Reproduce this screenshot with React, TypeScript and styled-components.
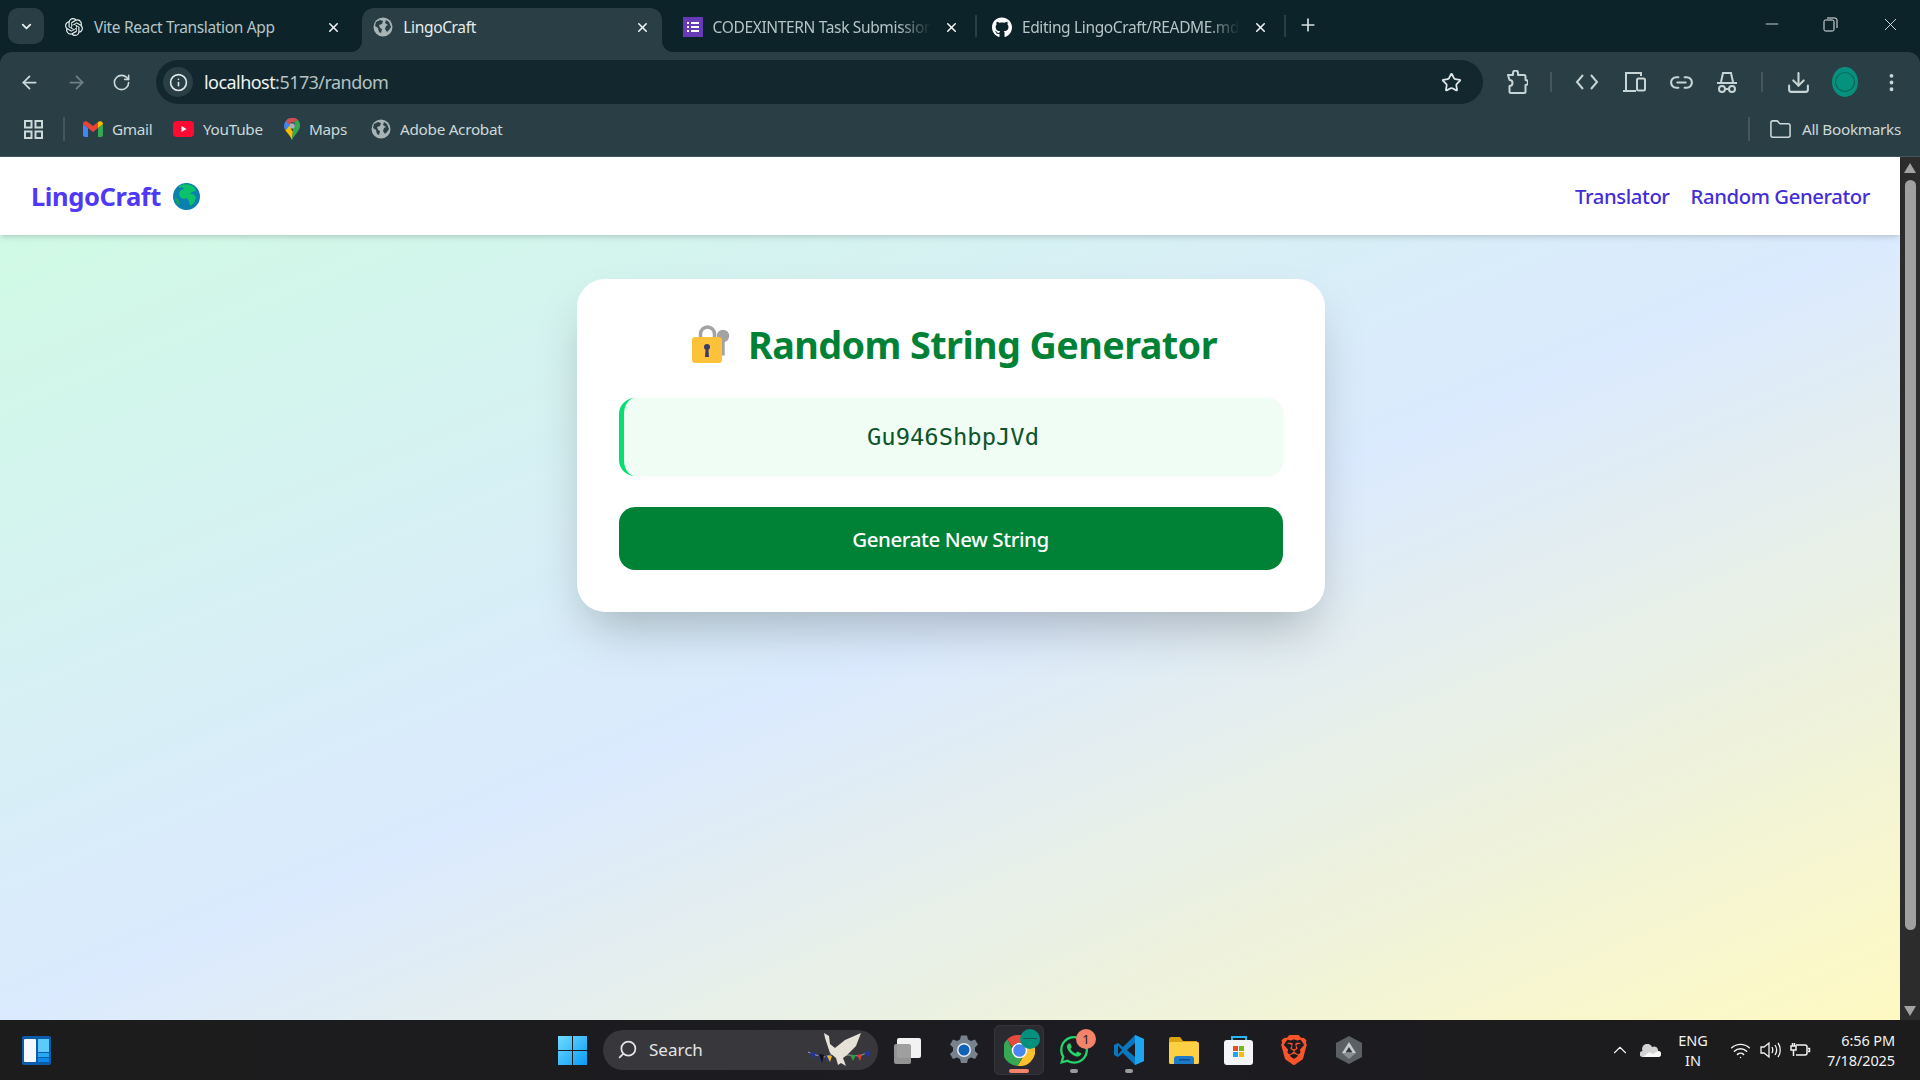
import React from "react";
import styled, { createGlobalStyle } from "styled-components";
import { ArrowLeft, ArrowRight, RotateCw, Info, Star, Link2, Download, EllipsisVertical, Folder, X, Plus, Minus, ChevronDown, ChevronUp, Search as SearchGlyph, Wifi } from "lucide-react";
import { SiOpenai, SiBrave } from "react-icons/si";
import { FaGithub, FaWhatsapp } from "react-icons/fa";

const UI = `"Noto Sans", "Open Sans", Arial, sans-serif`;

const Global = createGlobalStyle`
  html, body { margin: 0; padding: 0; width: 1920px; height: 1080px; overflow: hidden; }
  body { font-family: ${UI}; }
  * { box-sizing: border-box; }
`;

const Screen = styled.div`
  width: 1920px; height: 1080px; display: flex; flex-direction: column; overflow: hidden; background: #0c2329;
`;

const TabStrip = styled.div`
  height: 52px; background: #0c2329; display: flex; align-items: flex-end; padding-left: 8px; flex: none;
`;
const TabSearch = styled.div`
  width: 36px; height: 36px; margin: 0 9px 8px 0; border-radius: 10px; background: #2a3f45; color: #e4ebec;
  display: flex; align-items: center; justify-content: center;
`;
const Tab = styled.div<{ $active?: boolean; $sep?: boolean }>`
  position: relative; width: 300px; height: 44px; margin-right: 9.3px; flex: none;
  display: flex; align-items: center; padding: 0 0 6px 11px; color: ${p => (p.$active ? "#e6ecec" : "#b6c4c6")};
  font-size: 15.5px; letter-spacing: -0.35px; border-radius: 12px 12px 0 0;
  background: ${p => (p.$active ? "#2a3f45" : "transparent")};
  ${p => p.$active ? `
    &::before, &::after { content: ""; position: absolute; bottom: 0; width: 12px; height: 12px; }
    &::before { left: -12px; background: radial-gradient(circle at 0 0, transparent 12px, #2a3f45 12.5px); }
    &::after { right: -12px; background: radial-gradient(circle at 100% 0, transparent 12px, #2a3f45 12.5px); }
  ` : ""}
  ${p => p.$sep ? `
    &::after { content: ""; position: absolute; right: -5.5px; top: 7px; width: 2px; height: 22px; background: #2a3f45; }
  ` : ""}
`;
const TabIcon = styled.span`
  width: 20px; height: 20px; flex: none; display: flex; align-items: center; justify-content: center; color: #e8eeee;
`;
const TabTitle = styled.span<{ $fade?: boolean }>`
  margin-left: 10px; width: 218px; white-space: nowrap; flex: none;
  ${p => p.$fade ? `mask-image: linear-gradient(90deg, #000 85%, transparent 100%);` : ""}
`;
const TabClose = styled.span`
  margin-left: 11px; width: 20px; height: 20px; flex: none; display: flex; align-items: center; justify-content: center; color: #f0f4f4;
`;
const NewTab = styled.div`
  width: 24px; height: 24px; margin: 0 0 15px 6px; color: #d6e0e1; display: flex; align-items: center; justify-content: center;
`;
const WindowControls = styled.div`
  margin-left: auto; height: 52px; display: flex; align-items: center; padding: 0 19px 4px 0; gap: 41px; color: #e9eeee; align-self: flex-start;
`;
const Toolbar = styled.div`
  height: 52px; background: #2a3f45; border-radius: 12px 12px 0 0; display: flex; align-items: flex-start; flex: none; padding: 8px 0 0 19px; color: #cfdadb;
`;
const NavButton = styled.div<{ $dim?: boolean; $w?: number }>`
  width: ${p => p.$w ?? 46.5}px; height: 44px; display: flex; align-items: center; justify-content: flex-start; color: ${p => (p.$dim ? "#6f8084" : "#cfdadb")}; flex: none;
`;
const Omnibox = styled.div`
  width: 1327px; height: 44px; border-radius: 22px; background: #12282e; display: flex; align-items: center; padding: 0 21px 0 7px; flex: none;
`;
const InfoBubble = styled.div`
  width: 30px; height: 30px; border-radius: 50%; background: #2a3f45; color: #e3e9ea; display: flex; align-items: center; justify-content: center; flex: none;
`;
const Url = styled.div`
  margin-left: 11px; font-size: 18px; letter-spacing: -0.55px; color: #b4c2c4; flex: 1;
  & b { font-weight: 400; color: #eef2f2; }
`;
const ToolIcons = styled.div`
  display: flex; align-items: center; height: 44px; margin-left: 11px;
`;
const ToolSlot = styled.div<{ $w: number }>`
  width: ${p => p.$w}px; display: flex; justify-content: center; align-items: center; flex: none; color: #c8d5d6;
`;
const ToolSep = styled.div`
  width: 2px; height: 20px; background: #44575c; flex: none;
`;
const Avatar = styled.div`
  width: 26px; height: 30px; border-radius: 50%; background: #06917f; display: flex; align-items: center; justify-content: center;
  &::after { content: ""; width: 18px; height: 18px; border-radius: 50%; border: 1px solid #0f5c50; border-top-color: #0d6d5f; }
`;
const BookmarksBar = styled.div`
  height: 53px; background: #2a3f45; border-bottom: 1px solid #44565b; display: flex; align-items: center; padding: 0 0 2px 24px; color: #cdd8d9; font-size: 15.3px; letter-spacing: -0.3px; flex: none;
`;
const Bookmark = styled.div<{ $w: number }>`
  display: flex; align-items: center; width: ${p => p.$w}px; flex: none; gap: 9px; white-space: nowrap;
`;
const BarSep = styled.div<{ $tight?: boolean }>`
  width: 2px; height: 24px; background: #44575c; flex: none; margin: 0 ${p => (p.$tight ? 9 : 18)}px 0 20px;
`;
const AllBookmarks = styled.div`
  margin-left: auto; display: flex; align-items: center; gap: 10px; padding-right: 19px; white-space: nowrap;
`;
const PageRow = styled.div`
  flex: 1; min-height: 0; display: flex;
`;
const PageColumn = styled.div`
  flex: 1; min-width: 0; display: flex; flex-direction: column;
`;
const TopNav = styled.nav`
  height: 78px; background: #fff; display: flex; align-items: center; justify-content: space-between; padding: 0 30px 0 31px;
  box-shadow: 0 4px 6px -1px rgba(0,0,0,.1), 0 2px 4px -2px rgba(0,0,0,.1); position: relative; z-index: 1; flex: none;
`;
const Brand = styled.div`
  display: flex; align-items: center; gap: 12px; font-size: 25.5px; font-weight: 700; color: #4f39f6; letter-spacing: -0.4px;
`;
const NavLinks = styled.div`
  display: flex; gap: 21px;
`;
const NavLink = styled.a`
  font-size: 20.3px; font-weight: 500; color: #432dd7; letter-spacing: -0.4px;
`;
const Content = styled.main`
  flex: 1; padding: 44px 0 0 1px; display: flex; justify-content: center; align-items: flex-start;
  background: linear-gradient(to bottom right, #d0fae5 0%, #dbeafe 50%, #fef9c2 100%);
`;
const Card = styled.section`
  width: 748px; background: #fff; border-radius: 28px; padding: 42px; display: flex; flex-direction: column; flex: none;
  box-shadow: 0 25px 50px -12px rgba(0, 0, 0, .25);
`;
const Title = styled.h1`
  margin: 0; height: 49px; display: flex; justify-content: center; align-items: center; gap: 18px; padding: 0 0 3px 8px;
  font-size: 37.8px; font-weight: 700; color: #008236; letter-spacing: -0.6px; white-space: nowrap;
`;
const Output = styled.div`
  margin-top: 28px; height: 78px; background: #f0fdf4; border-left: 5px solid #05df72; border-radius: 16px; flex: none;
  display: flex; align-items: center; justify-content: center; font-family: "DejaVu Sans Mono", "Liberation Mono", monospace; font-size: 23.8px; color: #0d542b;
  box-shadow: 0 0 2px rgba(0,0,0,.06);
`;
const Generate = styled.button`
  margin-top: 31px; height: 63px; width: 100%; border: 0; border-radius: 16px; background: #008236; color: #fff; flex: none;
  font-family: ${UI}; font-size: 20.5px; font-weight: 500; letter-spacing: -0.4px;
`;
const Scrollbar = styled.div`
  width: 20px; flex: none; background: #2c2c2c; display: flex; flex-direction: column; align-items: center; padding-top: 6px;
`;
const ScrollArrow = styled.div<{ $down?: boolean }>`
  width: 0; height: 0; border-left: 6.5px solid transparent; border-right: 6.5px solid transparent;
  ${p => p.$down ? `border-top: 10px solid #a3a3a3; margin-top: auto; margin-bottom: 4px;` : `border-bottom: 10px solid #a3a3a3;`}
`;
const ScrollThumb = styled.div`
  width: 11px; height: 750px; margin-top: 7px; border-radius: 6px; background: #a0a0a0;
`;
const Taskbar = styled.footer`
  height: 60px; flex: none; background: linear-gradient(90deg, #1c1c1c, #1c1c22 55%, #1c1c1c); display: grid; grid-template-columns: 558px auto 1fr; align-items: center;
  color: #fff;
`;
const TaskLeft = styled.div`
  padding-left: 22px; display: flex; align-items: center;
`;
const TaskCenter = styled.div`
  display: flex; align-items: center;
`;
const SearchPill = styled.div`
  margin: 0 6px 0 16px; width: 275px; height: 40px; border-radius: 20px; background: #38383c; display: flex; align-items: center; padding: 0 6px 2px 14px; gap: 11px;
  font-size: 17px; color: #e4e4e4;
`;
const DoveSlot = styled.span`
  margin-left: auto; display: flex;
`;
const MirroredSearch = styled(SearchGlyph)`
  transform: scaleX(-1);
`;
const TaskSlot = styled.div<{ $active?: boolean; $dot?: string }>`
  position: relative; width: 50px; height: 50px; margin-right: 5px; border-radius: 6px; display: flex; align-items: center; justify-content: center; flex: none;
  ${p => p.$active ? `background: #2a2a30; box-shadow: inset 0 0 0 1px #35353a;` : ""}
  ${p => p.$dot ? `&::after { content: ""; position: absolute; bottom: 2px; left: 50%; transform: translateX(-50%); height: 4px; border-radius: 2px; width: ${p.$dot === "#9a9a9a" ? 8 : 20}px; background: ${p.$dot}; }` : ""}
`;
const Badge = styled.div`
  position: absolute; top: 4px; right: 3px; width: 20px; height: 20px; border-radius: 50%; background: #f5836a; color: #222; font-size: 13px; display: flex; align-items: center; justify-content: center;
`;
const Tray = styled.div`
  display: flex; align-items: center; justify-content: flex-end; padding-right: 25px; color: #f2f2f2; font-size: 14.5px; line-height: 20px;
`;
const TrayIcon = styled.div<{ $w: number }>`
  width: ${p => p.$w}px; display: flex; justify-content: center; align-items: center; flex: none;
`;
const TrayLang = styled.div`
  width: 64px; text-align: center; flex: none;
`;
const Clock = styled.div`
  width: 80px; text-align: right; flex: none; letter-spacing: -0.1px; white-space: nowrap;
`;

const GlobeGrey = () => (
  <svg width="20" height="20" viewBox="0 0 20 20">
    <circle cx="10" cy="10" r="9.5" fill="#a8b3b6" />
    <path d="M3 5l4-2 3 1-1 3-3 1 1 3 2 1-1 4-2-1-1-4-3-2zM13 3l3 2 2 5-2 3-2 2-2-3 1-3 2-1-3-2z" fill="#2a3f45" />
  </svg>
);
const FormsIcon = () => (
  <svg width="20" height="20" viewBox="0 0 20 20">
    <rect width="20" height="20" fill="#673ab7" />
    <path d="M4 5h2v2H4zM8 5h8v2H8zM4 9h2v2H4zM8 9h8v2H8zM4 13h2v2H4zM8 13h8v2H8z" fill="#fff" />
  </svg>
);
const Gmail = () => (
  <svg width="20" height="16" viewBox="0 0 20 16">
    <path d="M0 3v11a2 2 0 002 2h3V7z" fill="#4285f4" />
    <path d="M20 3v11a2 2 0 01-2 2h-3V7z" fill="#34a853" />
    <path d="M0 3l5 4 5 4 5-4V1l-5 4-6-4.5C2 -.5 0 1 0 3z" fill="#ea4335" />
    <path d="M15 1v6l5-4c0-2-2-3.500-4-2.500z" fill="#fbbc04" />
  </svg>
);
const YouTube = () => (
  <svg width="21" height="16" viewBox="0 0 21 16">
    <rect width="21" height="16" rx="4" fill="#ff0a33" />
    <path d="M8.500 5l5 3-5 3z" fill="#fff" />
  </svg>
);
const Maps = () => (
  <svg width="16" height="22" viewBox="0 0 16 22">
    <path d="M8 0a8 8 0 00-6.500 12.500L5 8a3.500 3.500 0 015-3.500l3.500-3A8 8 0 008 0z" fill="#4285f4" />
    <path d="M1.500 12.500C3 15 6 17 8 22l1-8-4-6z" fill="#fbbc04" />
    <path d="M8 22c2-5 8-9 8-14a8 8 0 00-2.500-6.500L10 4.500c2 2 1 5-1 6.500z" fill="#34a853" />
    <path d="M10 4.500L13.500 1.500A8 8 0 002 3l3 4a3.500 3.500 0 015-2.500z" fill="#ea4335" opacity=".85" />
    <circle cx="8" cy="8" r="2.800" fill="#fff" opacity=".6" />
  </svg>
);
const AppsGrid = () => (
  <svg width="19" height="19" viewBox="0 0 19 19" fill="none" stroke="#cdd8d9" strokeWidth="2">
    <rect x="1" y="1" width="6.500" height="6.500" /><rect x="11.500" y="1" width="6.500" height="6.500" />
    <rect x="1" y="11.500" width="6.500" height="6.500" /><rect x="11.500" y="11.500" width="6.500" height="6.500" />
  </svg>
);
const ExtensionIcon = () => (
  <svg width="22" height="24" viewBox="0 0 22 24" fill="none" stroke="currentColor" strokeWidth="2" strokeLinejoin="round">
    <path d="M2 5h5V3a2.500 2.500 0 015 0v2h6a1.500 1.500 0 011.500 1.500V10a2.500 2.500 0 010 5v6.500A1.500 1.500 0 0118 23H5a1.500 1.500 0 01-1.500-1.500V16a3 3 0 000-6z" />
  </svg>
);
const CodeIcon = () => (
  <svg width="24" height="18" viewBox="0 0 24 18" fill="none" stroke="currentColor" strokeWidth="2">
    <path d="M8 2L2 9l6 7M16 2l6 7-6 7" />
  </svg>
);
const DevicesIcon = () => (
  <svg width="24" height="22" viewBox="0 0 24 22" fill="none" stroke="currentColor" strokeWidth="2">
    <path d="M3 19V2h15v3M0 20h13" /><rect x="14" y="7.500" width="8" height="12" rx="1.500" />
  </svg>
);
const SpyIcon = () => (
  <svg width="22" height="24" viewBox="0 0 22 24" fill="none" stroke="currentColor" strokeWidth="2">
    <path d="M1 13h20M5 12l2-9h8l2 9" /><circle cx="6" cy="19" r="3" /><circle cx="16" cy="19" r="3" /><path d="M9 19h4" />
  </svg>
);
const LockKey = () => (
  <svg width="38" height="38" viewBox="0 0 38 38">
    <path d="M8.500 14V9a7 7 0 0114 0v5" fill="none" stroke="#a3a3a3" strokeWidth="3.500" />
    <circle cx="31" cy="11" r="6.200" fill="#a3a3a3" />
    <rect x="29.500" y="14" width="3.200" height="16.500" fill="#a3a3a3" />
    <rect y="12" width="30" height="26" rx="3" fill="#fbc23a" />
    <circle cx="15" cy="22" r="3" fill="#3c3a6b" />
    <path d="M13.700 23h2.600l.7 9h-4z" fill="#3c3a6b" />
  </svg>
);
const EarthEmoji = () => (
  <svg width="27" height="27" viewBox="0 0 27 27">
    <circle cx="13.500" cy="13.500" r="13.500" fill="#0b7fae" />
    <path d="M6 3c3-2 11-3 15 1l2 4-4 1-2 2h3l3 3-2 6-4 3-1-5-2-3-4 1-3-2-1-4 2-3 3-1-2-2-3 1z" fill="#0cc268" />
    <path d="M2 14l3 2 2 5-2 1-3-4z" fill="#14a05a" />
  </svg>
);
const Windows11 = ({ size = 29 }: { size?: number }) => (
  <svg width={size} height={size} viewBox="0 0 29 29">
    <defs>
      <linearGradient id="w11" x1="0" y1="0" x2="1" y2="1"><stop offset="0" stopColor="#6fdcff" /><stop offset="1" stopColor="#0a9bf5" /></linearGradient>
    </defs>
    <path d="M0 0h14v14H0zM15 0h14v14H15zM0 15h14v14H0zM15 15h14v14H15z" fill="url(#w11)" />
  </svg>
);
const WidgetIcon = () => (
  <svg width="29" height="29" viewBox="0 0 29 29">
    <rect width="29" height="29" rx="2" fill="#0d5cab" />
    <rect x="2" y="3" width="12" height="23" rx="1" fill="#f4f7fb" />
    <rect x="16" y="3" width="11" height="13" fill="#5ccbfa" />
    <rect x="16" y="17" width="11" height="4" fill="#28a8f0" />
    <rect x="16" y="22" width="11" height="4" fill="#0f8ae8" />
  </svg>
);
const Dove = () => (
  <svg width="66" height="40" viewBox="0 0 66 40">
    <path d="M2 23l8 3 8 2 10-3 14 1 12 1 10-5" fill="none" stroke="#bbb" strokeWidth=".8" />
    <path d="M4 23l6 1-3 6zM12 25l5 1-3 7zM19 27l5 0-2 7z" fill="#2335a5" />
    <path d="M13 25l5 1-2 8z" fill="#111" />
    <path d="M21 27l5 0-2 6z" fill="#f2b21b" />
    <path d="M44 26l6 0-3 6z" fill="#2d9a46" /><path d="M51 26l5-1-2 7z" fill="#d34040" /><path d="M58 24l6-3v8z" fill="#2335a5" />
    <path d="M18 4l5 3 1 8 5 4 10-8 16-7-5 13-9 9-4 3 3 8-5-3-3 2-2-7-6-5-5-15z" fill="#e6e2d8" />
  </svg>
);
const TaskViewIcon = () => (
  <svg width="30" height="30" viewBox="0 0 30 30">
    <rect x="3" y="3" width="24" height="20" rx="2" fill="#f2f2f2" />
    <rect y="9" width="17" height="20" rx="2" fill="#9a9a9a" opacity=".95" />
  </svg>
);
const Gear = () => (
  <svg width="30" height="30" viewBox="0 0 30 30">
    <path d="M12 0h6l1 4 3 1.500 4-1.500 3 5-3 3v3.500l3 3-3 5-4-1.500-3 1.500-1 4h-6l-1-4-3-1.500-4 1.500-3-5 3-3V12L1 9l3-5 4 1.500L11 4z" fill="#77828c" transform="translate(0 .5)" />
    <circle cx="15" cy="15" r="7" fill="#e9eef2" /><circle cx="15" cy="15" r="5.500" fill="#0f62b8" />
  </svg>
);
const Chrome = () => (
  <svg width="31" height="31" viewBox="0 0 32 32">
    <path d="M16 0a16 16 0 0113.900 8H16a8 8 0 00-7.500 5L3.500 4.500A16 16 0 0116 0z" fill="#e64a3b" />
    <path d="M3.500 4.500L9.500 16a8 8 0 009 7.500L14 32A16 16 0 013.500 4.500z" fill="#34a853" />
    <path d="M29.900 8a16 16 0 01-15.900 24l7-12a8 8 0 00-1-12z" fill="#fbc02d" />
    <circle cx="16" cy="16" r="8" fill="#fff" /><circle cx="16" cy="16" r="6.500" fill="#4a86f0" />
  </svg>
);
const MiniAvatar = styled.div`
  position: absolute; top: 4px; right: 4px; width: 20px; height: 20px; border-radius: 50%; background: #06917f;
  &::after { content: ""; display: block; height: 1px; margin: 9px 3px 0; background: #0f5c50; }
`;
const VSCode = () => (
  <svg width="30" height="30" viewBox="0 0 30 30">
    <path d="M21 0l9 4v22l-9 4-12-12-5 4-4-2v-10l4-2 5 4z" fill="#0a77c0" />
    <path d="M21 0l9 4v22l-9 4z" fill="#1ea5ef" />
    <path d="M21 8v14l-8-7z" fill="#1c1c22" />
    <path d="M4 10.500L8 15l-4 4.500z" fill="#1c1c22" />
  </svg>
);
const FolderColor = () => (
  <svg width="30" height="27" viewBox="0 0 30 27">
    <path d="M0 2a2 2 0 012-2h9l3 4h14v6H0z" fill="#dba410" />
    <rect y="5" width="30" height="22" rx="1.500" fill="#fdd044" />
    <path d="M5 27v-5a3 3 0 013-3h14a3 3 0 013 3v5z" fill="#1c7ac9" />
    <rect x="10" y="22" width="11" height="1.500" fill="#0c4f8f" />
  </svg>
);
const StoreIcon = () => (
  <svg width="30" height="30" viewBox="0 0 30 30">
    <path d="M8 6V2h14v4" fill="none" stroke="#29b6f6" strokeWidth="2" />
    <rect y="5" width="29" height="25" rx="3" fill="#f4f5f6" />
    <rect x="9" y="11" width="5" height="5" fill="#e94e2b" /><rect x="15" y="11" width="5" height="5" fill="#7cb518" />
    <rect x="9" y="17" width="5" height="5" fill="#1ea5ef" /><rect x="15" y="17" width="5" height="5" fill="#fbbc04" />
  </svg>
);
const PolyIcon = () => (
  <svg width="26" height="28" viewBox="0 0 26 28">
    <path d="M13 0l13 7v14l-13 7L0 21V7z" fill="#5b6064" />
    <path d="M13 6l7 11H6z" fill="#c9ccce" /><path d="M13 11l3.500 5.500h-7z" fill="#33363a" />
    <path d="M6 17h14l-7 6z" fill="#8a8f93" />
  </svg>
);
const Cloud = () => (
  <svg width="21" height="13" viewBox="0 0 21 13">
    <path d="M3 13a3 3 0 01-.5-6A5 5 0 0112 3a4 4 0 016 4 3 3 0 010 6z" fill="#d2d2d2" />
    <path d="M3 13l6-5 4 2 5-3a3 3 0 010 6z" fill="#f7f7f7" />
  </svg>
);
const Speaker = () => (
  <svg width="21" height="18" viewBox="0 0 21 18" fill="none" stroke="#f2f2f2" strokeWidth="1.300">
    <path d="M1 6h3l5-4v14l-5-4H1zM12 6c1 2 1 4 0 6M15 4c2 3 2 7 0 10M18 2c3 4 3 10 0 14" />
  </svg>
);
const BatteryPlug = () => (
  <svg width="21" height="16" viewBox="0 0 21 16" fill="none" stroke="#f2f2f2" strokeWidth="1.500">
    <path d="M6 3h9a2 2 0 012 2v6a2 2 0 01-2 2H6M18 6.500h1.500v3H18" />
    <path d="M1 4h5v4H1zM2.500 1v3M4.500 1v3M3.500 8v6" />
  </svg>
);

const App = () => (
  <Screen>
    <Global />
    <TabStrip>
      <TabSearch><ChevronDown size={15} strokeWidth={3} /></TabSearch>
      <Tab>
        <TabIcon><SiOpenai size={18} /></TabIcon>
        <TabTitle>Vite React Translation App</TabTitle>
        <TabClose><X size={15} strokeWidth={2.5} /></TabClose>
      </Tab>
      <Tab $active>
        <TabIcon><GlobeGrey /></TabIcon>
        <TabTitle>LingoCraft</TabTitle>
        <TabClose><X size={15} strokeWidth={2.5} /></TabClose>
      </Tab>
      <Tab $sep>
        <TabIcon><FormsIcon /></TabIcon>
        <TabTitle $fade>CODEXINTERN Task Submission</TabTitle>
        <TabClose><X size={15} strokeWidth={2.5} /></TabClose>
      </Tab>
      <Tab $sep>
        <TabIcon><FaGithub size={21} color="#fff" /></TabIcon>
        <TabTitle $fade>Editing LingoCraft/README.md</TabTitle>
        <TabClose><X size={15} strokeWidth={2.5} /></TabClose>
      </Tab>
      <NewTab><Plus size={20} /></NewTab>
      <WindowControls>
        <Minus size={20} strokeWidth={1} />
        <svg width="16" height="16" viewBox="0 0 16 16" fill="none" stroke="currentColor" strokeWidth="1"><rect x="1" y="4" width="10" height="11" rx="1.500" /><path d="M4 2h8a2 2 0 012 2v8" /></svg>
        <X size={21} strokeWidth={1} />
      </WindowControls>
    </TabStrip>
    <Toolbar>
      <NavButton><ArrowLeft size={21} /></NavButton>
      <NavButton $dim><ArrowRight size={21} /></NavButton>
      <NavButton $w={44}><RotateCw size={19} /></NavButton>
      <Omnibox>
        <InfoBubble><Info size={19} /></InfoBubble>
        <Url><b>localhost</b>:5173/random</Url>
        <Star size={21} color="#dfe7e8" />
      </Omnibox>
      <ToolIcons>
        <ToolSlot $w={46}><ExtensionIcon /></ToolSlot>
        <ToolSlot $w={22}><ToolSep /></ToolSlot>
        <ToolSlot $w={49}><CodeIcon /></ToolSlot>
        <ToolSlot $w={47}><DevicesIcon /></ToolSlot>
        <ToolSlot $w={46}><Link2 size={25} /></ToolSlot>
        <ToolSlot $w={46}><SpyIcon /></ToolSlot>
        <ToolSlot $w={24}><ToolSep /></ToolSlot>
        <ToolSlot $w={48}><Download size={25} /></ToolSlot>
        <ToolSlot $w={46}><Avatar /></ToolSlot>
        <ToolSlot $w={46}><EllipsisVertical size={23} /></ToolSlot>
      </ToolIcons>
    </Toolbar>
    <BookmarksBar>
      <AppsGrid />
      <BarSep />
      <Bookmark $w={90}><Gmail />Gmail</Bookmark>
      <Bookmark $w={111}><YouTube />YouTube</Bookmark>
      <Bookmark $w={87}><Maps />Maps</Bookmark>
      <Bookmark $w={140}><GlobeGrey />Adobe Acrobat</Bookmark>
      <AllBookmarks>
        <BarSep $tight />
        <Folder size={23} strokeWidth={1.6} />
        All Bookmarks
      </AllBookmarks>
    </BookmarksBar>
    <PageRow>
      <PageColumn>
        <TopNav>
          <Brand>LingoCraft <EarthEmoji /></Brand>
          <NavLinks>
            <NavLink>Translator</NavLink>
            <NavLink>Random Generator</NavLink>
          </NavLinks>
        </TopNav>
        <Content>
          <Card>
            <Title><LockKey />Random String Generator</Title>
            <Output>Gu946ShbpJVd</Output>
            <Generate>Generate New String</Generate>
          </Card>
        </Content>
      </PageColumn>
      <Scrollbar>
        <ScrollArrow />
        <ScrollThumb />
        <ScrollArrow $down />
      </Scrollbar>
    </PageRow>
    <Taskbar>
      <TaskLeft><WidgetIcon /></TaskLeft>
      <TaskCenter>
        <Windows11 />
        <SearchPill>
          <MirroredSearch size={21} />
          Search
          <DoveSlot><Dove /></DoveSlot>
        </SearchPill>
        <TaskSlot><TaskViewIcon /></TaskSlot>
        <TaskSlot><Gear /></TaskSlot>
        <TaskSlot $active $dot="#f5836a"><Chrome /><MiniAvatar /></TaskSlot>
        <TaskSlot $dot="#9a9a9a"><FaWhatsapp size={32} color="#25d366" /><Badge>1</Badge></TaskSlot>
        <TaskSlot $dot="#9a9a9a"><VSCode /></TaskSlot>
        <TaskSlot><FolderColor /></TaskSlot>
        <TaskSlot><StoreIcon /></TaskSlot>
        <TaskSlot><SiBrave size={30} color="#fb542b" /></TaskSlot>
        <TaskSlot><PolyIcon /></TaskSlot>
      </TaskCenter>
      <Tray>
        <TrayIcon $w={38}><ChevronUp size={22} strokeWidth={1.2} /></TrayIcon>
        <TrayIcon $w={22}><Cloud /></TrayIcon>
        <TrayLang>ENG<br />IN</TrayLang>
        <TrayIcon $w={30}><Wifi size={21} strokeWidth={1.7} /></TrayIcon>
        <TrayIcon $w={30}><Speaker /></TrayIcon>
        <TrayIcon $w={30}><BatteryPlug /></TrayIcon>
        <Clock>6:56 PM<br />7/18/2025</Clock>
      </Tray>
    </Taskbar>
  </Screen>
);

export default App;
